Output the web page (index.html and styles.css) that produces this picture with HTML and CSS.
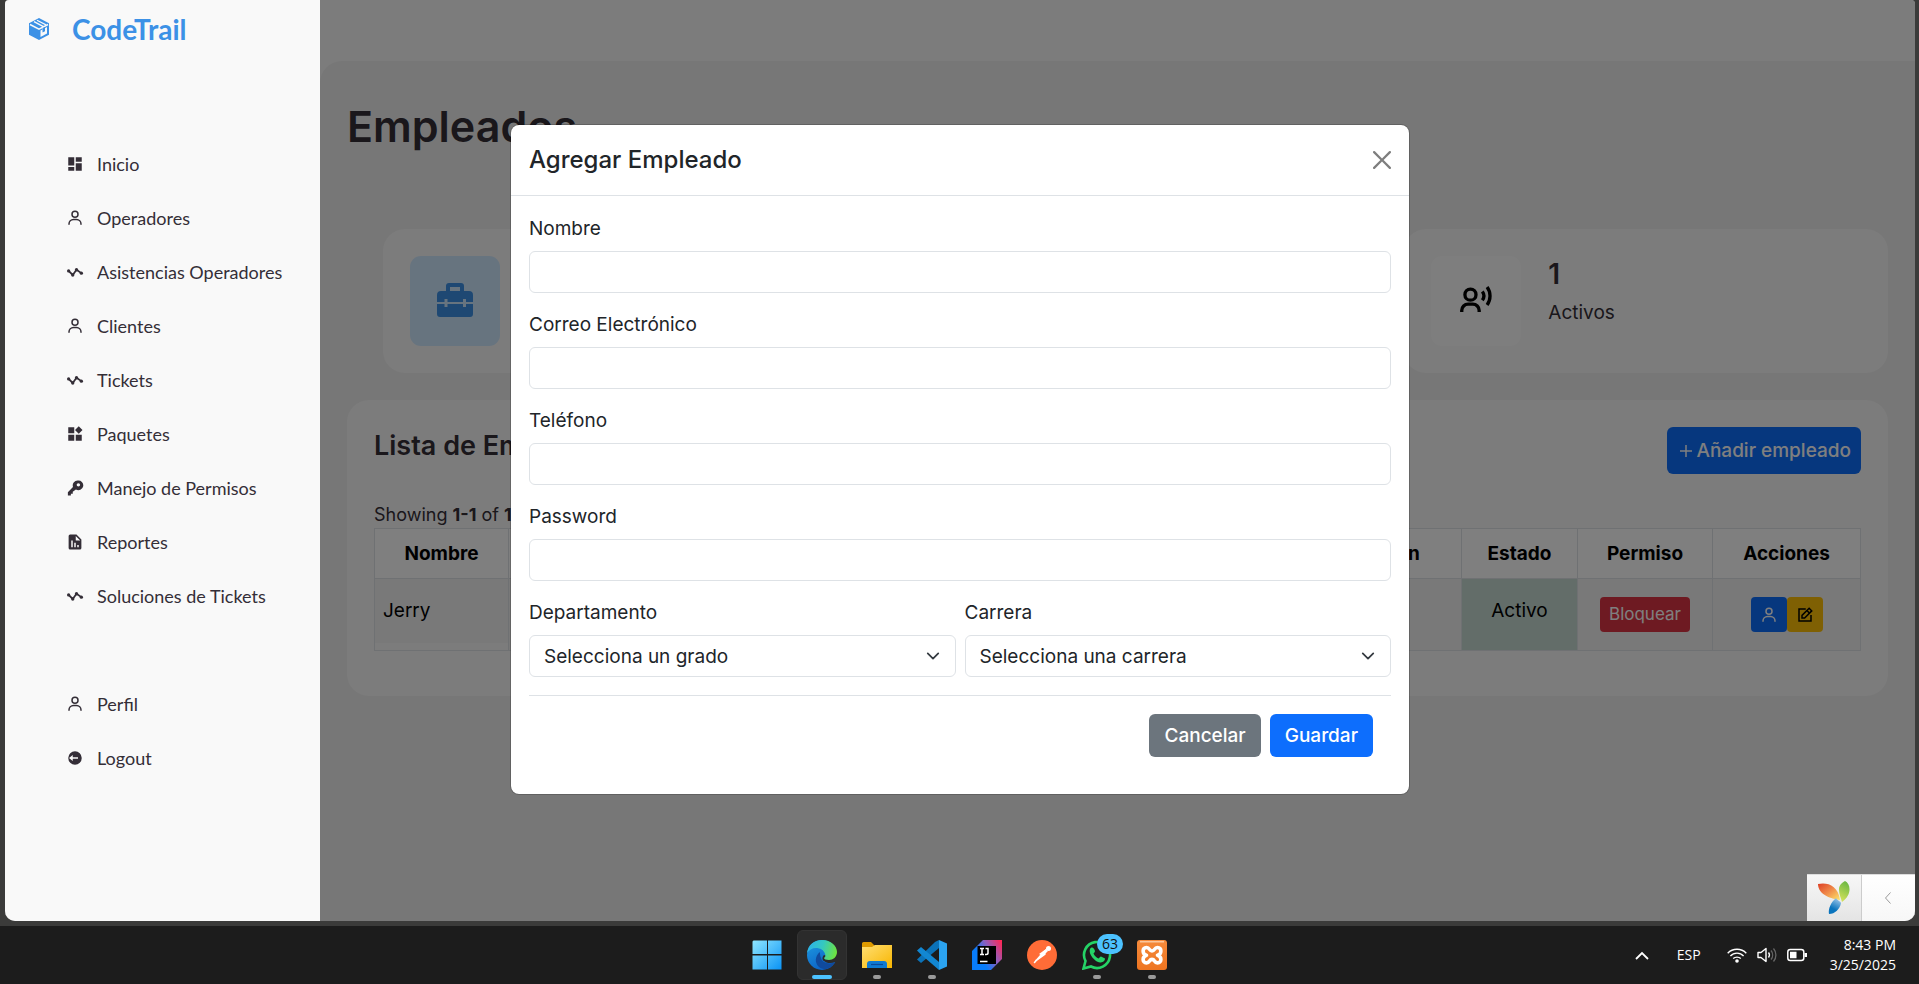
FILE: index.html
```html
<!DOCTYPE html>
<html lang="es">
<head>
<meta charset="utf-8">
<meta name="viewport" content="width=device-width, initial-scale=1">
<title>CodeTrail - Empleados</title>
<link rel="stylesheet" href="styles.css">
</head>
<body>
<svg class="sprite" aria-hidden="true">
  <symbol id="i-user" viewBox="0 0 24 24"><path d="M12 2a5 5 0 1 0 5 5 5 5 0 0 0-5-5zm0 8a3 3 0 1 1 3-3 3 3 0 0 1-3 3zm9 11v-1a7 7 0 0 0-7-7h-4a7 7 0 0 0-7 7v1h2v-1a5 5 0 0 1 5-5h4a5 5 0 0 1 5 5v1z"/></symbol>
  <symbol id="i-dashboard" viewBox="0 0 24 24"><path d="M3 3h8v11H3zM13 3h8v6h-8zM3 16h8v5H3zM13 11h8v10h-8z"/></symbol>
  <symbol id="i-chart" viewBox="0 0 24 24"><path d="M3.500 10.500l5.500 5.500 5-7 6.500 4.500" fill="none" stroke="currentColor" stroke-width="2.400" stroke-linejoin="round"/><circle cx="3.500" cy="10.500" r="2.200"/><circle cx="9" cy="16" r="2.200"/><circle cx="14" cy="9" r="2.200"/><circle cx="20.500" cy="13.500" r="2.200"/></symbol>
  <symbol id="i-widget" viewBox="0 0 24 24"><path d="M3 3h8v8H3zM3 13h8v8H3zM13 13h8v8h-8zM17 1.800l5 5-5 5-5-5z"/></symbol>
  <symbol id="i-key" viewBox="0 0 24 24"><path fill-rule="evenodd" d="M15.500 2a6.500 6.500 0 0 0-6.200 8.500L2.500 17.500V22h4v-2.500H9V17l4.200-3A6.500 6.500 0 1 0 15.500 2zm1 3.500a2.300 2.300 0 1 1 0 4.600 2.300 2.300 0 0 1 0-4.600z"/></symbol>
  <symbol id="i-report" viewBox="0 0 24 24"><path fill-rule="evenodd" d="M5.500 2H14l6.500 6.500V20a2 2 0 0 1-2 2h-13a2 2 0 0 1-2-2V4a2 2 0 0 1 2-2zM13 4v6h6zM7 10v9h2v-9zm4 3v6h2v-6zm4 3v3h2v-3z"/></symbol>
  <symbol id="i-logout" viewBox="0 0 24 24"><path fill-rule="evenodd" d="M12 3a9 9 0 1 1 0 18 9 9 0 0 1 0-18zM9 8l-5 4 5 4v-3h7v-2H9z"/></symbol>
  <symbol id="i-edit" viewBox="0 0 24 24"><path d="M20 12v8H4V4h9" fill="none" stroke="currentColor" stroke-width="2"/><path d="M8 16v-3.500L17.500 3 21 6.500 11.500 16z" fill="none" stroke="currentColor" stroke-width="2"/><path d="M14.500 6l3.500 3.500" stroke="currentColor" stroke-width="2"/></symbol>
</svg>

<div class="desktop">
  <div class="window">
    <aside class="sidebar">
      <a class="brand" href="#">
        <svg class="brand-icon" viewBox="0 0 24 24"><path d="M12 1l10 5.300v11.400L12 23 2 17.700V6.300z"/><path d="M3 7.500l9 4.600 9-4.600M7 4.600l9 4.800v3" fill="none" stroke="#f9f9f9" stroke-width="1.500"/><path d="M10 3.200l9 4.700" stroke="#f9f9f9" stroke-width="1.200"/><path d="M13.500 13.400l6.500-3.300v6.500l-6.500 3.400z" fill="#f9f9f9"/><path d="M15.500 11v4.500l2.500-1.300V10z"/></svg>
        <span>CodeTrail</span>
      </a>
      <nav class="menu">
        <a href="#"><svg><use href="#i-dashboard"/></svg>Inicio</a>
        <a href="#"><svg><use href="#i-user"/></svg>Operadores</a>
        <a href="#"><svg><use href="#i-chart"/></svg>Asistencias Operadores</a>
        <a href="#"><svg><use href="#i-user"/></svg>Clientes</a>
        <a href="#"><svg><use href="#i-chart"/></svg>Tickets</a>
        <a href="#"><svg><use href="#i-widget"/></svg>Paquetes</a>
        <a href="#"><svg><use href="#i-key"/></svg>Manejo de Permisos</a>
        <a href="#"><svg><use href="#i-report"/></svg>Reportes</a>
        <a href="#"><svg><use href="#i-chart"/></svg>Soluciones de Tickets</a>
      </nav>
      <nav class="menu menu-account">
        <a href="#"><svg><use href="#i-user"/></svg>Perfil</a>
        <a href="#"><svg><use href="#i-logout"/></svg>Logout</a>
      </nav>
    </aside>

    <div class="content">
      <main class="page">
        <h1>Empleados</h1>
        <section class="cards">
          <article class="card">
            <span class="card-icon card-icon-blue"><svg viewBox="0 0 36 36"><path fill-rule="evenodd" d="M12 0h12a3 3 0 0 1 3 3v5h5a4 4 0 0 1 4 4v7h-7v-3h-3v3H10.500v-3h-3v3H0v-7a4 4 0 0 1 4-4h5V3a3 3 0 0 1 3-3zm1 4v4h10V4zM0 21h7.500v3h3v-3H26v3h3v-3h7v10a3 3 0 0 1-3 3H3a3 3 0 0 1-3-3z"/></svg></span>
          </article>
          <article class="card"></article>
          <article class="card">
            <span class="card-icon card-icon-light"><svg class="voice" viewBox="0 0 24 24"><path d="M8.500 11.500c2 0 3.500-1.500 3.500-3.500s-1.500-3.500-3.500-3.500S5 6 5 8s1.500 3.500 3.500 3.500zM3 19v-1a4 4 0 0 1 4-4h3a4 4 0 0 1 4 4v1M16 6a4.600 4.600 0 0 1 0 5.500M19 3.200a9.500 9.500 0 0 1 0 11.300" fill="none" stroke="#000" stroke-width="2.100"/></svg></span>
            <div class="card-text"><h3>1</h3><p>Activos</p></div>
          </article>
        </section>

        <section class="list">
          <header class="list-head">
            <h2>Lista de Empleados</h2>
            <button class="btn btn-primary btn-add" type="button"><svg viewBox="0 0 12 12"><path d="M6 0v12M0 6h12" stroke="currentColor" stroke-width="1.500"/></svg>Añadir empleado</button>
          </header>
          <p class="summary">Showing <b>1-1</b> of <b>1</b></p>
          <table class="grid">
            <colgroup><col class="col-name"><col><col><col class="col-address"><col class="col-state"><col class="col-permit"><col class="col-actions"></colgroup>
            <thead><tr><th>Nombre</th><th>Correo</th><th>Teléfono</th><th>Dirección</th><th>Estado</th><th>Permiso</th><th>Acciones</th></tr></thead>
            <tbody><tr>
              <td class="name"><div>Jerry</div></td><td></td><td></td><td></td>
              <td class="active">Activo</td>
              <td><button class="btn-sm btn-danger" type="button">Bloquear</button></td>
              <td><div class="actions"><button class="btn-sm btn-primary" type="button" aria-label="Ver"><svg><use href="#i-user"/></svg></button><button class="btn-sm btn-warning" type="button" aria-label="Editar"><svg><use href="#i-edit"/></svg></button></div></td>
            </tr></tbody>
          </table>
        </section>
      </main>
    </div>

    <div class="backdrop"></div>

    <div class="modal" role="dialog" aria-labelledby="modal-title">
      <header class="modal-head">
        <h2 id="modal-title">Agregar Empleado</h2>
        <button class="close" type="button" aria-label="Cerrar"><svg viewBox="0 0 16 16"><path d="M.293.293a1 1 0 0 1 1.414 0L8 6.586 14.293.293a1 1 0 1 1 1.414 1.414L9.414 8l6.293 6.293a1 1 0 0 1-1.414 1.414L8 9.414l-6.293 6.293a1 1 0 0 1-1.414-1.414L6.586 8 .293 1.707a1 1 0 0 1 0-1.414"/></svg></button>
      </header>
      <form class="modal-body">
        <div class="field"><label for="nombre">Nombre</label><input id="nombre" type="text"></div>
        <div class="field"><label for="correo">Correo Electrónico</label><input id="correo" type="email"></div>
        <div class="field"><label for="telefono">Teléfono</label><input id="telefono" type="tel"></div>
        <div class="field"><label for="password">Password</label><input id="password" type="password"></div>
        <div class="row">
          <div class="field"><label for="departamento">Departamento</label><select id="departamento"><option>Selecciona un grado</option></select></div>
          <div class="field"><label for="carrera">Carrera</label><select id="carrera"><option>Selecciona una carrera</option></select></div>
        </div>
        <footer class="modal-foot">
          <button class="btn btn-secondary" type="button">Cancelar</button>
          <button class="btn btn-primary" type="submit">Guardar</button>
        </footer>
      </form>
    </div>

    <div class="debugbar">
      <a href="#" aria-label="Yii Debugger"><svg viewBox="0 0 32 34">
        <defs>
          <linearGradient id="y1" x1="0" y1="0" x2="1" y2="1"><stop offset="0" stop-color="#dd3f25"/><stop offset=".5" stop-color="#f08b4a"/><stop offset="1" stop-color="#fde76c"/></linearGradient>
          <linearGradient id="y2" x1=".6" y1="0" x2=".3" y2="1"><stop offset="0" stop-color="#6cb843"/><stop offset="1" stop-color="#d6e35c"/></linearGradient>
          <linearGradient id="y3" x1=".7" y1="0" x2=".3" y2="1"><stop offset="0" stop-color="#9ec7ea"/><stop offset=".7" stop-color="#0a74bd"/></linearGradient>
        </defs>
        <path fill="url(#y1)" d="M0 3c9-2 20 1 22 16C14 18 0 14 0 3z"/>
        <path fill="url(#y2)" d="M27 0c6 3 7 14-3 21-2-7-7-16 3-21z"/>
        <path fill="url(#y3)" d="M18 17c2 3 4 3 5 5-1 6-6 11-12 11-1-5 2-12 7-16z"/></svg></a>
      <button type="button" aria-label="Abrir"><svg viewBox="0 0 6 12"><path d="M5.500.5L.5 6l5 5.500" fill="none" stroke="#999"/></svg></button>
    </div>
  </div>

  <footer class="taskbar">
    <div class="apps">
      <button type="button" aria-label="Inicio"><svg viewBox="0 0 30 30"><defs><linearGradient id="w1" x1="0" y1="0" x2="1" y2="1"><stop offset="0" stop-color="#8fe6ff"/><stop offset="1" stop-color="#0a93f5"/></linearGradient></defs><path fill="url(#w1)" d="M1.500.500H15V14H.500V1.500zM16 .500h13.500V14H16zM.500 15.500H15v14H.500zM16 15.500h13.500v14H16z"/></svg></button>
      <button class="running current" type="button" aria-label="Edge"><svg viewBox="0 0 30 30"><defs><linearGradient id="e1" x1="0" y1=".3" x2="1" y2=".5"><stop offset="0" stop-color="#2cb1ea"/><stop offset=".5" stop-color="#35c8c0"/><stop offset="1" stop-color="#6de33f"/></linearGradient><linearGradient id="e2" x1="0" y1="0" x2=".6" y2="1"><stop offset="0" stop-color="#1f9de2"/><stop offset="1" stop-color="#0a5fc4"/></linearGradient></defs>
        <circle cx="15" cy="15" r="15" fill="url(#e2)"/>
        <path fill="#104a9d" d="M13 12c-4 3-6 9-2 14 4 5 13 4 17-4-5 3-13 1-14-4-1-2-1-4-1-6z"/>
        <path fill="#2b2b2b" d="M31 10v13l-3-1c-4 2-9 1-11-1-2-1-2-4 0-6l5 2z"/>
        <path fill="url(#e1)" d="M0 13C1 5 7 0 15 0c9 0 15 6 15 12 0 5-4 8-8 8-3 0-5-1-5-2 1-1 2-2 1-4-1-4-5-6-9-6-4 0-7 2-9 5z"/></svg></button>
      <button class="running" type="button" aria-label="Explorador"><svg viewBox="0 0 30 30"><defs><linearGradient id="f1" x1="0" y1="0" x2="1" y2="1"><stop offset="0" stop-color="#ffdf73"/><stop offset="1" stop-color="#f8b500"/></linearGradient></defs><path fill="#dd9a00" d="M0 3.500a1.500 1.500 0 0 1 1.500-1.500H9l4 4v4H0z"/><path fill="url(#f1)" d="M0 7h10l3-2h17v23H0z"/><path fill="#0f7ad2" d="M5 28v-4a3 3 0 0 1 3-3h14a3 3 0 0 1 3 3v4z"/><path stroke="#0a4a9b" stroke-width="1.200" d="M9 24.500h12"/></svg></button>
      <button class="running" type="button" aria-label="Visual Studio Code"><svg viewBox="0 0 30 30"><path fill="#0b72b8" d="M22 0v8L4 23l-4-3.500L18 2z"/><path fill="#1287d2" d="M0 10.500L4 7l18 15v8L4 14.500z"/><path fill="#2ba3f0" d="M22 0l8 3.500v23L22 30z"/></svg></button>
      <button type="button" aria-label="IntelliJ IDEA"><svg viewBox="0 0 30 30"><defs><linearGradient id="j1" x1="0" y1=".7" x2="1" y2=".1"><stop offset=".25" stop-color="#087cfa"/><stop offset=".6" stop-color="#8b5fc0"/><stop offset="1" stop-color="#fe2857"/></linearGradient></defs><path fill="url(#j1)" d="M0 11L11 0h19v19L19 30H0z"/><path fill="#000" d="M5.500 6H24v18H5.500z"/><path fill="none" stroke="#fff" stroke-width="1.500" d="M8 8.500h4M10 8.500v6M8 14.500h4M13.500 8.500h2.500v4.500q0 1.500-2 1.500h-1M8 21.500h7.500"/></svg></button>
      <button type="button" aria-label="Postman"><svg viewBox="0 0 30 30"><circle cx="15" cy="15" r="15" fill="#ff6c37"/><path d="M19 10l-5 5-6.500 7.500M18 14l-9 6.500" fill="none" stroke="#fff" stroke-width="1.600" stroke-linecap="round"/><path d="M12 14l7-5 2 2-5 5z" fill="#fff"/><circle cx="21.500" cy="8.500" r="2.500" fill="#fff"/></svg></button>
      <button class="running" type="button" aria-label="WhatsApp"><svg viewBox="0 0 30 30"><path d="M1.500 28.500l2-7.500A13 13 0 1 1 9 26.500z" fill="none" stroke="#25d366" stroke-width="2.600"/><path fill="#25d366" d="M8 9c2-3 4-1 5 2 0 1-1 2-1.500 2.500 1 2.500 3 4 5 5 1-.5 1.500-2 2.500-2l4 2c0 3-3 4-5 4C13 22 6 14 8 9z"/></svg><span class="badge">63</span></button>
      <button class="running" type="button" aria-label="XAMPP"><svg viewBox="0 0 30 30"><defs><linearGradient id="x1" x1="0" y1="0" x2="0" y2="1"><stop offset="0" stop-color="#f58b3c"/><stop offset="1" stop-color="#ee7420"/></linearGradient></defs><rect width="30" height="30" rx="3" fill="url(#x1)"/><path d="M3 1h24v1.500H3z" fill="#fbc79c"/><path fill="none" stroke="#fff" stroke-width="3.600" stroke-linejoin="round" d="M9.500 15.200C5 14 5 7.500 9.500 7.500c3.500 0 2.500 3.500 5.500 3.500s2-3.500 5.500-3.500c4.500 0 4.500 6.500 0 7.700 4.500 1.200 4.500 7.700 0 7.700-3.500 0-2.500-3.500-5.500-3.500s-2 3.500-5.500 3.500c-4.500 0-4.500-6.500 0-7.700z"/></svg></button>
    </div>
    <div class="tray">
      <svg class="t-chevron" viewBox="0 0 14 9"><path d="M1 8l6-6 6 6" fill="none" stroke="#fff" stroke-width="1.800"/></svg>
      <span class="lang">ESP</span>
      <div class="status">
        <svg viewBox="0 0 20 16"><g fill="none" stroke="#fff" stroke-width="1.400"><path d="M.7 6.200a13 13 0 0 1 18.600 0M3.400 9a9 9 0 0 1 13.200 0M6.200 11.600a5.500 5.500 0 0 1 7.600 0"/></g><circle cx="10" cy="14" r="1.800" fill="#fff"/></svg>
        <svg viewBox="0 0 20 16"><path d="M1 5.500h3L9 1.500v13l-5-4H1z" fill="none" stroke="#fff" stroke-width="1.400" stroke-linejoin="round"/><path d="M11.500 5.500a4 4 0 0 1 0 5" fill="none" stroke="#fff" stroke-width="1.300"/><path d="M14 3.500a7 7 0 0 1 0 9M16.500 1.500a10 10 0 0 1 0 13" fill="none" stroke="#666" stroke-width="1.300"/></svg>
        <svg viewBox="0 0 20 16"><rect x=".8" y="2.500" width="16" height="11" rx="2.500" fill="none" stroke="#fff" stroke-width="1.500"/><path d="M3 4.700h6.500v6.600H3zM17.500 6H20v4h-2.500z" fill="#fff"/></svg>
      </div>
      <div class="clock"><span>8:43 PM</span><span>3/25/2025</span></div>
    </div>
  </footer>
</div>
</body>
</html>
```

FILE: styles.css
```css
*, *::before, *::after { box-sizing: border-box; }

body {
  margin: 0;
  background: #3b3b3a;
  color: #342e37;
  font-family: Inter, "Liberation Sans", sans-serif;
  font-size: 19px;
  line-height: 27px;
}

h1, h2, h3, p { margin: 0; }
a { color: inherit; text-decoration: none; }
button, input, select { font: inherit; color: inherit; margin: 0; }
button { border: 0; cursor: pointer; }
svg { fill: currentColor; flex: none; }
.sprite { display: none; }

.desktop { min-height: 100vh; display: flex; flex-direction: column; }

/* Browser window */
.window {
  position: relative;
  flex: 1;
  display: flex;
  margin: 0 4px 5px 5px;
  border-radius: 4px 4px 10px 10px;
  overflow: hidden;
  background: #f9f9f9;
}

.sidebar {
  position: relative;
  z-index: 2;
  width: 315px;
  background: #f9f9f9;
  font-family: Lato, "Liberation Sans", sans-serif;
  font-size: 18px;
}
.brand {
  display: flex;
  align-items: center;
  gap: 21px;
  height: 58px;
  padding-left: 22px;
  color: #3c91e6;
  font-size: 28px;
  font-weight: 700;
}
.brand-icon { width: 24px; height: 24px; }
.menu { display: flex; flex-direction: column; margin-top: 79px; }
.menu-account { margin-top: 54px; }
.menu a {
  display: flex;
  align-items: center;
  gap: 13px;
  height: 54px;
  padding-left: 61px;
}
.menu svg { width: 18px; height: 18px; }

/* Page */
.content { flex: 1; min-width: 0; display: flex; padding-top: 61px; }
.page {
  flex: 1;
  min-width: 0;
  padding: 38px 27px 27px;
  background: #eee;
  border-top-left-radius: 22px;
}
.page h1 { font-size: 43px; line-height: 54px; font-weight: 600; }

.cards {
  display: grid;
  grid-template-columns: repeat(3, 1fr);
  gap: 27px;
  margin-top: 76px;
  padding-left: 36px;
}
.card {
  display: flex;
  align-items: center;
  gap: 27px;
  min-height: 144px;
  padding: 27px;
  border-radius: 22px;
  background: #f9f9f9;
}
.card-icon {
  display: grid;
  place-items: center;
  width: 90px;
  height: 90px;
  border-radius: 11px;
}
.card-icon svg { width: 36px; height: 36px; }
.card-icon .voice { width: 38px; height: 38px; }
.card-icon-blue { background: #cfe8ff; color: #3c91e6; }
.card-icon-light { background: #fdfdfd; }
.card-text h3 { font-size: 28px; line-height: 32px; font-weight: 600; }
.card-text p { margin: 9px 0 18px; }

.list {
  margin-top: 27px;
  padding: 27px 27px 45px;
  border-radius: 22px;
  background: #f9f9f9;
}
.list-head { display: flex; justify-content: space-between; align-items: flex-start; }
.list-head h2 { font-size: 27px; line-height: 38px; font-weight: 600; }
.summary { margin-top: 27px; font-size: 18px; }

.btn {
  display: flex;
  align-items: center;
  height: 43px;
  padding: 0 15px;
  border-radius: 6px;
  font-weight: 500;
}
.btn-primary { background: #0d6efd; color: #fff; }
.btn-secondary { background: #6c757d; color: #fff; }
.btn-danger { background: #dc3545; color: #fff; }
.btn-warning { background: #ffc107; color: #000; }
.btn-add { height: 47px; padding: 0 10px 0 13px; gap: 4px; }
.btn-add svg { width: 12px; height: 12px; }

.grid { width: 100%; table-layout: fixed; border-collapse: collapse; color: #000; }
.col-name { width: 134px; }
.col-address { width: 172px; }
.col-state { width: 116px; }
.col-permit { width: 135px; }
.col-actions { width: 148px; }
.grid th, .grid td { border: 1px solid #dee2e6; }
.grid th { height: 50px; padding: 0; background: #fff; font-weight: 700; }
.grid td { padding: 18px 9px; background: #f2f2f2; text-align: center; vertical-align: top; }
.grid td.name { padding: 0; background: #f9f9f9; text-align: left; }
.name div { min-height: 64px; padding: 18px 8px; background: #f2f2f2; }
.grid td.active { background: #c7dbd2; }
.actions { display: flex; justify-content: center; }
.btn-sm {
  display: inline-flex;
  align-items: center;
  height: 35px;
  padding: 0 9px;
  border-radius: 4px;
  font-size: 17px;
  vertical-align: top;
}
.btn-sm svg { width: 18px; height: 18px; }

/* Dialog */
.backdrop { position: absolute; inset: 0; z-index: 1; background: rgba(0, 0, 0, .5); }
.modal {
  position: absolute;
  z-index: 3;
  top: 124px;
  left: 0;
  right: 0;
  width: 900px;
  max-width: 100%;
  margin: 0 auto;
  border: 1px solid rgba(0, 0, 0, .18);
  border-radius: 9px;
  background: #fff;
  background-clip: padding-box;
  color: #212529;
}
.modal-head {
  display: flex;
  justify-content: space-between;
  align-items: center;
  height: 71px;
  padding: 0 18px;
  border-bottom: 1px solid #dee2e6;
}
.modal-head h2 { font-size: 24px; line-height: 34px; font-weight: 500; }
.close { display: flex; padding: 0; background: none; color: #000; opacity: .5; }
.close svg { width: 18px; height: 18px; }
.modal-body { padding: 19px 18px; }
.field { display: flex; flex-direction: column; gap: 9px; margin-bottom: 18px; }
.field input, .field select {
  width: 100%;
  height: 42px;
  padding: 0 14px;
  border: 1px solid #dee2e6;
  border-radius: 6px;
  background-color: #fff;
}
.field select {
  appearance: none;
  background-image: url("data:image/svg+xml,%3Csvg xmlns='http://www.w3.org/2000/svg' viewBox='0 0 16 16'%3E%3Cpath fill='none' stroke='%23343a40' stroke-linecap='round' stroke-linejoin='round' stroke-width='2' d='m2 5 6 6 6-6'/%3E%3C/svg%3E");
  background-repeat: no-repeat;
  background-position: right 14px center;
  background-size: 16px 14px;
}
.row { display: grid; grid-template-columns: 1fr 1fr; gap: 9px; }
.modal-foot {
  display: flex;
  justify-content: flex-end;
  gap: 9px;
  padding: 18px;
  border-top: 1px solid #dee2e6;
}

.debugbar {
  position: absolute;
  z-index: 3;
  right: 0;
  bottom: 0;
  display: flex;
  width: 108px;
  height: 47px;
  border-top: 1px solid #ddd;
}
.debugbar a, .debugbar button {
  flex: 1;
  display: grid;
  place-items: center;
  padding: 0;
  background: linear-gradient(#fff, #f7f7f7);
}
.debugbar a { border-right: 1px solid #ccc; background: linear-gradient(#f7f7f7, #e4e4e4); }
.debugbar a svg { width: 32px; height: 34px; }
.debugbar button svg { width: 6px; height: 12px; }

/* Taskbar */
.taskbar {
  display: grid;
  grid-template-columns: 1fr auto 1fr;
  align-items: center;
  height: 58px;
  background: #1c1c1c;
  color: #fff;
  font-family: "Open Sans", "Noto Sans", sans-serif;
  font-size: 14px;
  line-height: 20px;
}
.apps { grid-column: 2; display: flex; gap: 5px; }
.apps button {
  position: relative;
  display: grid;
  place-items: center;
  width: 50px;
  height: 50px;
  padding: 0;
  border: 1px solid transparent;
  border-radius: 6px;
  background: none;
}
.apps button.current { background: #2b2b2b; border-color: #333; }
.apps svg { width: 30px; height: 30px; }
.running::after {
  content: "";
  position: absolute;
  left: 50%;
  bottom: 0;
  width: 8px;
  height: 4px;
  margin-left: -4px;
  border-radius: 2px;
  background: #9a9a9a;
}
.current::after { width: 20px; margin-left: -10px; background: #4cc2ff; }
.badge {
  position: absolute;
  top: 3px;
  right: -2px;
  width: 26px;
  height: 20px;
  border-radius: 10px;
  background: #4cc2ff;
  color: #111;
  font-size: 14px;
}
.tray { display: flex; justify-content: flex-end; align-items: center; padding-right: 23px; }
.t-chevron { width: 14px; height: 9px; }
.lang { margin: 0 26px 0 28px; }
.status { display: flex; gap: 10px; margin-right: 23px; }
.status svg { width: 20px; height: 16px; }
.clock { display: flex; flex-direction: column; text-align: right; }
```
